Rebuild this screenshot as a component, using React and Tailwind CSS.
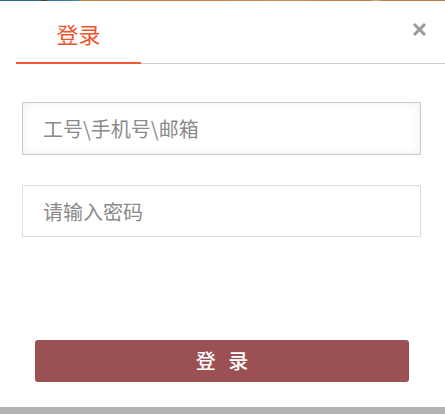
import { useState } from 'react';

const font = { fontFamily: '"Noto Sans CJK SC", "Noto Sans", sans-serif' };

const App = () => {
  const [account, setAccount] = useState('');
  const [password, setPassword] = useState('');

  return (
    <div className="w-[445px] h-[414px] flex flex-col bg-white overflow-hidden" style={font}>
      {/* peek of the page behind the dialog */}
      <div className="h-px w-full bg-[linear-gradient(90deg,#2e6b8f_0px,#2e6b8f_40px,#4a3424_44px,#3c7aa0_50px,#3f7fa6_78px,#c4823f_80px,#c98a48_300px,#c27a3c_370px,#b9b2a8_376px,#c27a3c_382px,#c27a3c_445px)]"></div>

      {/* header */}
      <div className="h-[61px] flex items-stretch justify-between">
        <div className="ml-[16px] w-[125px] flex items-center justify-center">
          <span className="text-[22px] leading-none text-[#f0532d] pt-[2px]">登录</span>
        </div>
        <button className="mr-[18px] flex items-start pt-[21px]">
          <svg width="15" height="15" viewBox="0 0 15 15">
            <path d="M2 2 L13 13 M13 2 L2 13" stroke="#999999" strokeWidth="3" strokeLinecap="butt" />
          </svg>
        </button>
      </div>
      <div className="h-[2px] flex items-end">
        <div className="ml-[16px] w-[125px] h-[2px] bg-[#ef5a30]"></div>
        <div className="flex-1 h-px bg-[#cccccc]"></div>
      </div>

      {/* form */}
      <div className="flex flex-col px-[22px] pr-[24px] mt-[38px] gap-[30px]">
        <input
          autoFocus
          value={account}
          onChange={(e) => setAccount(e.target.value)}
          placeholder="工号\手机号\邮箱"
          className="h-[53px] w-full border border-[#cccccc] px-[20px] text-[20px] text-[#555] placeholder:text-[#8a8a8a] outline-none shadow-[inset_0_0_8px_rgba(0,0,0,0.08)]"
          style={font}
        />
        <input
          type="password"
          value={password}
          onChange={(e) => setPassword(e.target.value)}
          placeholder="请输入密码"
          className="h-[52px] w-full border border-[#dddddd] px-[20px] text-[20px] text-[#555] placeholder:text-[#8a8a8a] outline-none"
          style={font}
        />
      </div>

      <div className="flex-1"></div>

      <div className="px-[35px] pr-[36px] mb-[25px]">
        <button className="w-full h-[42px] rounded-[3px] bg-[#9b5053] text-white text-[20px] font-medium tracking-[4px] pl-[4px]">
          登 录
        </button>
      </div>

      <div className="h-[7px] bg-[#b3b3b3]"></div>
    </div>
  );
};

export default App;
